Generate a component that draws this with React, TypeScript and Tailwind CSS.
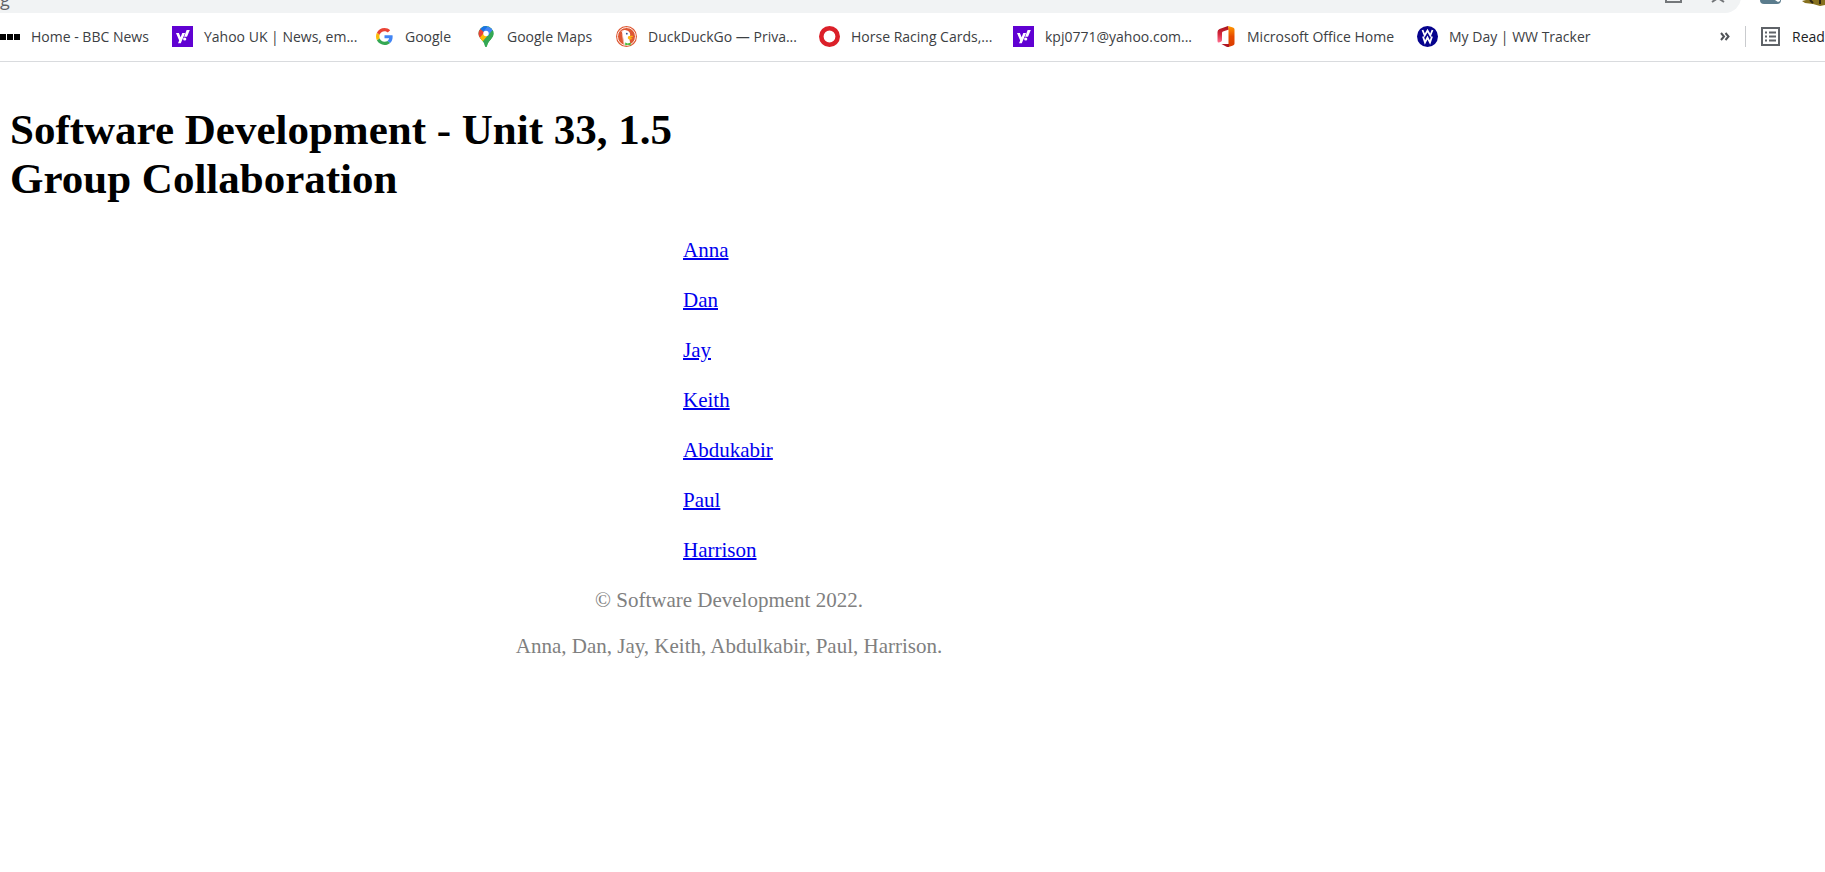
import type { ReactNode } from "react";

const YahooIcon = () => (
  <svg viewBox="0 0 21 21" className="size-[21px]" aria-hidden="true">
    <rect width="21" height="21" fill="#6001d2" />
    <path d="M4 7h2.900l1.700 4.200L10.300 7h2.800l-4.300 10.300H6l1.200-2.800z" fill="#fff" />
    <path d="M14.600 4h3.200l-2.800 6.800h-2.900z" fill="#fff" />
    <circle cx="12.700" cy="13" r="1.600" fill="#fff" />
  </svg>
);

const BbcIcon = () => (
  <svg viewBox="0 0 21 21" className="size-[21px]" aria-hidden="true">
    <path d="M0 8h6v6H0zM7 8h6v6H7zM14 8h6v6h-6z" fill="#000" />
  </svg>
);

const GoogleIcon = () => (
  <svg viewBox="0 0 24 24" className="size-[17px]" aria-hidden="true">
    <path fill="#4285f4" d="M23.500 12.300c0-.9-.1-1.500-.2-2.200H12v4.500h6.500c-.1 1.100-.8 2.700-2.400 3.800l3.700 2.900c2.300-2.100 3.700-5.200 3.700-9z" />
    <path fill="#34a853" d="M12 24c3.200 0 6-1.100 7.900-2.900l-3.800-2.900c-1 .7-2.400 1.200-4.100 1.200-3.200 0-5.800-2.100-6.800-5l-3.900 3C3.300 21.300 7.300 24 12 24z" />
    <path fill="#fbbc05" d="M5.200 14.400c-.2-.7-.4-1.500-.4-2.400s.1-1.600.4-2.400l-4-3C.5 8.200 0 10.100 0 12s.5 3.800 1.300 5.400z" />
    <path fill="#ea4335" d="M12 4.700c2.200 0 3.700 1 4.600 1.800l3.400-3.300C17.900 1.200 15.200 0 12 0 7.300 0 3.300 2.700 1.300 6.600l3.900 3c1-2.900 3.600-4.900 6.800-4.900z" />
  </svg>
);

const MapsIcon = () => (
  <svg viewBox="0 0 16 21" className="h-[21px] w-4" aria-hidden="true">
    <defs>
      <clipPath id="pin">
        <path d="M8 0a7.500 7.500 0 0 1 7.500 7.500c0 5-5.200 6.500-6.600 12.700Q8 21.800 7.100 20.200C5.700 14 .5 12.500.5 7.500A7.500 7.500 0 0 1 8 0z" />
      </clipPath>
    </defs>
    <g clipPath="url(#pin)">
      <path fill="#34a853" d="M0 0h16v21H0z" />
      <path fill="#ea4335" d="M2.300 2.700L8 7.500l-5.700 7L-1 8z" />
      <path fill="#1a73e8" d="M2 2.700L5 0h4L8 7.500z" />
      <path fill="#4285f4" d="M5.500 5.200L10 0l5.500 4.500-5 5.700z" />
      <path fill="#34a853" d="M13 3.500l4 2v16H5z" />
      <path fill="#4285f4" d="M8 7.500l6-6v3l-4 5z" />
      <path fill="#fbbc04" d="M1.800 11.800l3.800-4.500L9 10.300l-5 6z" />
    </g>
    <circle cx="8" cy="7.500" r="2.700" fill="#fff" />
  </svg>
);

const DuckIcon = () => (
  <svg viewBox="0 0 21 21" className="size-[21px]" aria-hidden="true">
    <circle cx="10.500" cy="10.500" r="10.500" fill="#de5833" />
    <circle cx="10.500" cy="10.500" r="9" fill="none" stroke="#fff" strokeWidth=".9" />
    <path d="M6 6c0-2 2-2.400 4-1.800 2.500.5 4.200 2 4.200 4.600l-.7 4.700.9 4.700c-2.500 1-4.500 1-6 .6L6.800 11z" fill="#fff" />
    <path d="M4.800 5.600L8 4.300M6.300 8L8 19" stroke="#f4c9bb" strokeWidth=".8" />
    <circle cx="10.800" cy="7.700" r=".9" fill="#2d4f8e" />
    <path d="M12 10.500c1.600-.9 3.500-.7 5.300-.4-.6 1.100-2 1.500-3.300 1.900 1 .4 2 .3 2.700.6-1.600 1.500-4.200 1-4.900-.3z" fill="#fdb813" />
    <path d="M9.200 16.600l2.500 1 3-1.200v3l-2.900-.7-2.600.9z" fill="#4cba3c" />
  </svg>
);

const RacingIcon = () => (
  <svg viewBox="0 0 21 21" className="size-[21px]" aria-hidden="true">
    <circle cx="10.500" cy="10.500" r="8.200" fill="#fff" stroke="#db2029" strokeWidth="4.600" />
  </svg>
);

const OfficeIcon = () => (
  <svg viewBox="0 0 18 21" className="h-[21px] w-[18px]" aria-hidden="true">
    <defs>
      <linearGradient id="office-left" x1="0" y1="0" x2="0" y2="1">
        <stop offset="0" stopColor="#a4121b" />
        <stop offset=".5" stopColor="#d6273c" />
        <stop offset="1" stopColor="#ff6f91" />
      </linearGradient>
      <linearGradient id="office-right" x1="0" y1="0" x2="0" y2="1">
        <stop offset="0" stopColor="#ff9a00" />
        <stop offset=".5" stopColor="#e64a00" />
        <stop offset="1" stopColor="#d83b01" />
      </linearGradient>
    </defs>
    <path d="M11 0L2.500 3Q.5 3.800.5 6v9q0 1.800 1.500 1.500l2-.8q1-.5 1-1.700V7q0-1 1-1.400L12 3.500z" fill="url(#office-left)" />
    <path d="M11 0l5 1.600q1.500.5 1.500 2v14q0 1.500-1.500 2L11.500 21V3.500z" fill="url(#office-right)" />
    <path d="M4.500 18h7.500v3q-1.500.1-3-.6z" fill="#b01722" />
  </svg>
);

const WwIcon = () => (
  <svg viewBox="0 0 21 21" className="size-[21px]" aria-hidden="true">
    <circle cx="10.500" cy="10.500" r="10.500" fill="#06038d" />
    <path d="M5.500 4l2.200 5.500L10.500 4.500l2.800 5L15.500 4M6 10.500L8 16.500l2.500-5 2.500 5 2-6" fill="none" stroke="#fff" strokeWidth="1.800" />
  </svg>
);

type Bookmark = { label: string; icon: ReactNode; iconBox: string; width: string };

const bookmarks: Bookmark[] = [
  { label: "Home - BBC News", icon: <BbcIcon />, iconBox: "w-[31px]", width: "w-[172px]" },
  { label: "Yahoo UK | News, em...", icon: <YahooIcon />, iconBox: "w-8", width: "w-[204px]" },
  { label: "Google", icon: <GoogleIcon />, iconBox: "w-[29px]", width: "w-[102px]" },
  { label: "Google Maps", icon: <MapsIcon />, iconBox: "w-[29px]", width: "w-[138px]" },
  { label: "DuckDuckGo — Priva...", icon: <DuckIcon />, iconBox: "w-8", width: "w-[203px]" },
  { label: "Horse Racing Cards,...", icon: <RacingIcon />, iconBox: "w-8", width: "w-[194px]" },
  { label: "kpj0771@yahoo.com...", icon: <YahooIcon />, iconBox: "w-8", width: "w-[204px]" },
  { label: "Microsoft Office Home", icon: <OfficeIcon />, iconBox: "w-[30px]", width: "w-[200px]" },
  { label: "My Day | WW Tracker", icon: <WwIcon />, iconBox: "w-8", width: "w-[170px]" },
];

const people = ["Anna", "Dan", "Jay", "Keith", "Abdukabir", "Paul", "Harrison"];

function AddressBar() {
  return (
    <div className="flex h-[13px] items-end overflow-hidden">
      <div className="flex h-8 flex-1 items-end justify-between rounded-br-[16px] bg-[#f1f3f4]">
        <span className="pb-[6px] text-[18px] leading-[16px] text-[#5f6368]">g</span>
        <svg viewBox="0 0 80 13" className="h-[13px] w-20" fill="none" stroke="#74777a" strokeWidth="2" aria-hidden="true">
          <path d="M5 0v2h15V0M51 2l6-4 6 4" />
        </svg>
      </div>
      <svg viewBox="0 0 84 13" className="h-[13px] w-[84px]" aria-hidden="true">
        <path d="M19 0h21q0 4-4 4H23q-4 0-4-4z" fill="#5b7c8d" />
        <path d="M34 0h5v1l-2 1z" fill="#fff" />
        <path d="M61 1l4-1h19v5l-5 1-7-2-8-1z" fill="#86701f" />
        <path d="M69 0l3 3M79 0v4" stroke="#2d2414" strokeWidth="2" />
      </svg>
    </div>
  );
}

function BookmarksBar() {
  return (
    <nav aria-label="Bookmarks" className="flex h-12 items-center overflow-hidden pb-px">
      {bookmarks.map((b) => (
        <a key={b.label} href="#" className={`flex shrink-0 items-center whitespace-nowrap ${b.width}`}>
          <span className={`shrink-0 ${b.iconBox}`}>{b.icon}</span>
          {b.label}
        </a>
      ))}
      <button type="button" aria-label="More bookmarks" className="mr-[15px] ml-auto shrink-0">
        <svg viewBox="0 0 10 9" className="h-[9px] w-[10px]" fill="none" stroke="#505357" strokeWidth="2" aria-hidden="true">
          <path d="M1 1l3 3.500L1 8M5.500 1l3 3.500-3 3.500" />
        </svg>
      </button>
      <span className="h-[21px] w-px shrink-0 bg-[#c9cbce]" />
      <button type="button" className="ml-[15px] flex w-16 shrink-0 items-center overflow-hidden whitespace-nowrap text-[#202124]">
        <span className="w-[31px] shrink-0">
          <svg viewBox="0 0 19 19" className="size-[19px]" fill="none" stroke="#5f6368" strokeWidth="2" aria-hidden="true">
            <path d="M1 1h17v17H1zM4 5.500h2M8 5.500h7M4 9.500h2M8 9.500h7M4 13.500h2M8 13.500h7" />
          </svg>
        </span>
        Reading list
      </button>
    </nav>
  );
}

export default function App() {
  return (
    <div className="min-h-screen overflow-x-hidden bg-white">
      <header className="border-b border-[#d9dbde] font-['Open_Sans',sans-serif] text-[14px] leading-[20px] text-[#3c4043]">
        <AddressBar />
        <BookmarksBar />
      </header>
      <main className="w-4/5 pt-[43px] pr-3 pl-[10px] font-['Liberation_Serif',serif] text-[21px] leading-[24px]">
        <h1 className="text-[43px] leading-[49px] font-bold text-black">
          Software Development - Unit 33, 1.5
          <br />
          Group Collaboration
        </h1>
        <ul className="mt-[35px] ml-[673px] flex flex-col gap-[26px]">
          {people.map((name) => (
            <li key={name}>
              <a href="#" className="text-[#0000ee] underline decoration-2">
                {name}
              </a>
            </li>
          ))}
        </ul>
        <footer className="mt-[26px] flex flex-col gap-[22px] text-center text-[#808080]">
          <p>© Software Development 2022.</p>
          <p>Anna, Dan, Jay, Keith, Abdulkabir, Paul, Harrison.</p>
        </footer>
      </main>
    </div>
  );
}
